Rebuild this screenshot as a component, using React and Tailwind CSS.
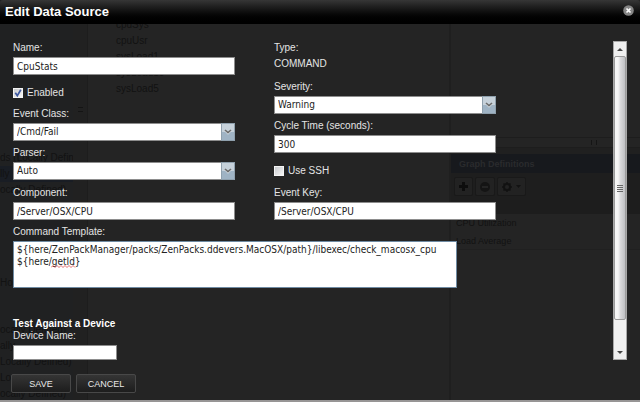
import React, { useState } from "react";

const label = "block h-4 font-['Liberation_Sans',Arial,sans-serif] text-[10px] leading-[14px] text-[#e4e4e4]";
const entry =
  "block h-[18px] w-full min-w-0 border border-[#8d8d8d] bg-white px-[3px] text-[10px] leading-4 text-[#222] outline-none font-['DejaVu_Sans_Condensed','DejaVu_Sans',Tahoma,sans-serif]";

function Field({ id, title, value }) {
  return (
    <div>
      <label htmlFor={id} className={label}>{title}</label>
      <input id={id} className={entry} defaultValue={value} />
    </div>
  );
}

function Choice({ id, title, value }) {
  return (
    <div>
      <label htmlFor={id} className={label}>{title}</label>
      <div className="relative">
        <select id={id} className={entry + " appearance-none"} defaultValue={value}>
          <option>{value}</option>
        </select>
        <span className="pointer-events-none absolute inset-y-0 right-0 flex w-[14px] items-center justify-center border border-[#8fa0ad] bg-linear-to-b from-[#c6d1da] from-50% to-[#9fb3c4] to-50%">
          <svg width="8" height="6" viewBox="0 0 8 6" fill="none">
            <path d="M1 2.2L4 5.2L7 2.2" stroke="#eef2f5" strokeWidth="1" />
            <path d="M1 1L4 3.6L7 1" stroke="#6c6c6c" strokeWidth="1.6" />
          </svg>
        </span>
      </div>
    </div>
  );
}

function Tick({ id, title, initial }) {
  const [on, setOn] = useState(initial);
  return (
    <div className="flex h-[22px] items-center gap-1 pt-1">
      <span className="relative flex">
        <input
          id={id}
          type="checkbox"
          checked={on}
          onChange={() => setOn(!on)}
          className="size-[10px] appearance-none border border-[#f4f4f4] bg-linear-to-br from-[#c9cbce] to-[#f5f5f5]"
        />
        {on && (
          <svg className="pointer-events-none absolute inset-0" width="10" height="10" viewBox="0 0 10 10" fill="none">
            <path d="M2.3 4.8L4.3 7.6L7.8 1.8" stroke="#3d58a0" strokeWidth="1.7" />
          </svg>
        )}
      </span>
      <label htmlFor={id} className="text-[10px] leading-[14px] text-[#e4e4e4]">{title}</label>
    </div>
  );
}

function GhostLine({ children, selected }) {
  return (
    <div className={"h-4 whitespace-nowrap " + (selected ? "bg-[#191d24]" : "")}>{children}</div>
  );
}

function GhostButton({ children }) {
  return (
    <span className="flex h-[19px] items-center justify-center gap-1 rounded-[2px] border border-[#191919] bg-[#222] px-1">
      {children}
    </span>
  );
}

/* The page that shows faintly through the dialog. */
function Backdrop() {
  return (
    <div aria-hidden="true" className="absolute inset-0 flex overflow-hidden text-[10px] leading-4 text-[#121212]">
      <div className="flex w-[73px] shrink-0 flex-col bg-[#202122] pt-[150px]">
        <GhostLine>ds (Locally Define</GhostLine>
        <GhostLine selected>lly</GhostLine>
        <GhostLine>ocally Defined)</GhostLine>
        <div className="h-20" />
        <GhostLine>Host</GhostLine>
        <div className="h-8" />
        <GhostLine>ocally Defined)</GhostLine>
        <GhostLine>ally</GhostLine>
        <GhostLine>Locally Defined)</GhostLine>
        <GhostLine>Loc</GhostLine>
        <GhostLine>ocally Defined)</GhostLine>
      </div>
      <div className="flex w-[15px] shrink-0 flex-col items-center border-r border-[#1d1d1d] bg-[#212121] pt-[107px]">
        <div className="h-[5px] w-[5px] border-y border-[#141414]" />
      </div>
      <div className="flex-1 bg-[#242424] pl-7 pt-[17px]">
        {["cpuSys", "cpuUsr", "sysLoad1", "sysLoad15", "sysLoad5"].map((name) => (
          <div key={name} className="h-4">{name}</div>
        ))}
      </div>
      <div className="w-[191px] shrink-0 border-l-2 border-[#1f1f1f] bg-[#242424] pt-[137px]">
        <div className="flex h-[11px] items-center justify-center border-y border-[#1d1d1d] pl-24">
          <span className="h-[5px] w-[6px] border-x border-[#151515]" />
        </div>
        <div className="h-[6px] bg-[#202020]" />
        <div className="flex h-[19px] items-center bg-[#17191d] pl-2 text-[9px] font-bold text-[#2a2b2d]">
          Graph Definitions
        </div>
        <div className="flex h-[27px] items-center gap-[2px] bg-[#1e1e1e] pl-[3px]">
          <GhostButton>
            <svg width="9" height="9" viewBox="0 0 9 9"><path d="M3 0h3v3h3v3H6v3H3V6H0V3h3z" fill="#0d0d0d" /></svg>
          </GhostButton>
          <GhostButton>
            <svg width="10" height="10" viewBox="0 0 10 10"><circle cx="5" cy="5" r="5" fill="#141414" /><path d="M2 5h6" stroke="#242424" strokeWidth="2" /></svg>
          </GhostButton>
          <GhostButton>
            <svg width="10" height="10" viewBox="0 0 10 10" fill="none" stroke="#121212"><circle cx="5" cy="5" r="3" strokeWidth="2" /><path d="M5 0v2M5 8v2M0 5h2M8 5h2M1.5 1.5l1.3 1.3M7.2 7.2l1.3 1.3M8.5 1.5L7.2 2.8M2.8 7.2L1.5 8.5" strokeWidth="1.5" /></svg>
            <svg width="5" height="3" viewBox="0 0 5 3"><path d="M0 0h5L2.5 3z" fill="#121212" /></svg>
          </GhostButton>
        </div>
        <div className="h-[14px] bg-[#1d1d1d]" />
        <div className="h-[18px] pl-[5px] text-[9px] leading-[18px]">CPU Utilization</div>
        <div className="h-[18px] border-b border-[#202020] pl-[5px] text-[9px] leading-[18px]">Load Average</div>
      </div>
    </div>
  );
}

function ScrollRail() {
  return (
    <div className="flex w-[14px] shrink-0 flex-col border border-[#a8a8a8] bg-[#efefef]">
      <button type="button" aria-label="Scroll up" className="flex h-[14px] shrink-0 items-center justify-center">
        <svg width="6" height="3" viewBox="0 0 6 3"><path d="M0 3L3 0L6 3z" fill="#444" /></svg>
      </button>
      <div className="flex min-h-0 flex-1 flex-col">
        <div className="flex flex-1 items-center justify-center rounded-[2px] border border-[#9b9b9b] bg-linear-to-r from-[#f6f6f6] from-30% via-[#d9d9db] via-55% to-[#bfc0c3]">
          <svg width="6" height="7" viewBox="0 0 6 7"><path d="M0 .5h6M0 2.5h6M0 4.5h6M0 6.5h6" stroke="#666" /></svg>
        </div>
        <div className="h-[26px]" />
      </div>
      <button type="button" aria-label="Scroll down" className="flex h-[13px] shrink-0 items-center justify-center">
        <svg width="6" height="3" viewBox="0 0 6 3"><path d="M0 0L3 3L6 0z" fill="#444" /></svg>
      </button>
    </div>
  );
}

function Action({ children }) {
  return (
    <button
      type="button"
      className="h-[19px] w-[60px] rounded-[2px] border border-[#484848] bg-linear-to-b from-[#353535] to-[#1d1d1d] text-[9px] leading-4 text-[#e8e8e8]"
    >
      {children}
    </button>
  );
}

export default function App() {
  return (
    <div className="relative min-h-screen bg-[#242424] font-['Liberation_Sans',Arial,sans-serif]">
      <Backdrop />
      <section
        role="dialog"
        aria-labelledby="dialog-title"
        className="relative flex min-h-screen flex-col border-b-2 border-[#979595]"
      >
        <header className="flex h-6 shrink-0 items-center justify-between rounded-t-[3px] bg-linear-to-b from-[#363636] to-black pl-[5px] pr-[6px]">
          <h1 id="dialog-title" className="text-[13px] font-bold leading-6 text-white">Edit Data Source</h1>
          <button type="button" aria-label="Close" className="mb-1">
            <svg width="11" height="11" viewBox="0 0 11 11">
              <circle cx="5.5" cy="5.5" r="5.3" fill="#858585" />
              <path d="M3.5 3.5L7.5 7.5M7.5 3.5L3.5 7.5" stroke="#fff" strokeWidth="1.7" />
            </svg>
          </button>
        </header>

        <form className="flex px-[13px] pt-[17px]" onSubmit={(e) => e.preventDefault()}>
          <div className="min-w-0 flex-1">
            <div className="grid grid-cols-[37%_37%] gap-x-[39px]">
              <div className="flex flex-col gap-[5px]">
                <Field id="name" title="Name:" value="CpuStats" />
                <Tick id="enabled" title="Enabled" initial={true} />
                <Choice id="event-class" title="Event Class:" value="/Cmd/Fail" />
                <Choice id="parser" title="Parser:" value="Auto" />
              </div>
              <div className="flex flex-col gap-[5px]">
                <div className="h-[34px]">
                  <div className={label}>Type:</div>
                  <div className={label}>COMMAND</div>
                </div>
                <Choice id="severity" title="Severity:" value="Warning" />
                <Field id="cycle" title="Cycle Time (seconds):" value="300" />
                <Tick id="ssh" title="Use SSH" initial={false} />
              </div>
            </div>
            <div className="mt-[6px] grid grid-cols-[37%_37%] gap-x-[39px]">
              <Field id="component" title="Component:" value="/Server/OSX/CPU" />
              <Field id="event-key" title="Event Key:" value="/Server/OSX/CPU" />
            </div>
            <div className="mt-[5px] w-[74%]">
              <label htmlFor="template" className={label}>Command Template:</label>
              <div className="relative">
                <textarea
                  id="template"
                  spellCheck={false}
                  className="block h-[47px] w-full resize-none overflow-hidden border border-[#6f8ba3] bg-white px-[3px] py-[2px] font-['DejaVu_Sans_Condensed','DejaVu_Sans',Tahoma,sans-serif] text-[10px] leading-3 text-[#222] outline-none"
                  defaultValue={"${here/ZenPackManager/packs/ZenPacks.ddevers.MacOSX/path}/libexec/check_macosx_cpu\n${here/getId}"}
                />
                <svg className="pointer-events-none absolute left-[38px] top-[24px]" width="26" height="3" viewBox="0 0 26 3" fill="none">
                  <path d="M0 2.5l2-2 2 2 2-2 2 2 2-2 2 2 2-2 2 2 2-2 2 2 2-2 2 2" stroke="#d94a4a" strokeWidth="0.8" />
                </svg>
              </div>
            </div>
            <h2 className="mt-[30px] text-[10px] font-bold leading-3 text-white">Test Against a Device</h2>
            <label htmlFor="device" className="block h-[15px] text-[10px] leading-3 text-[#e4e4e4]">Device Name:</label>
            <input id="device" className="block h-[15px] w-[104px] border border-[#8d8d8d] bg-white px-[3px] text-[10px] outline-none" />
          </div>
          <ScrollRail />
        </form>

        <footer className="mt-auto flex gap-[5px] px-[11px] pb-[7px] pt-[14px]">
          <Action>SAVE</Action>
          <Action>CANCEL</Action>
        </footer>
      </section>
    </div>
  );
}
